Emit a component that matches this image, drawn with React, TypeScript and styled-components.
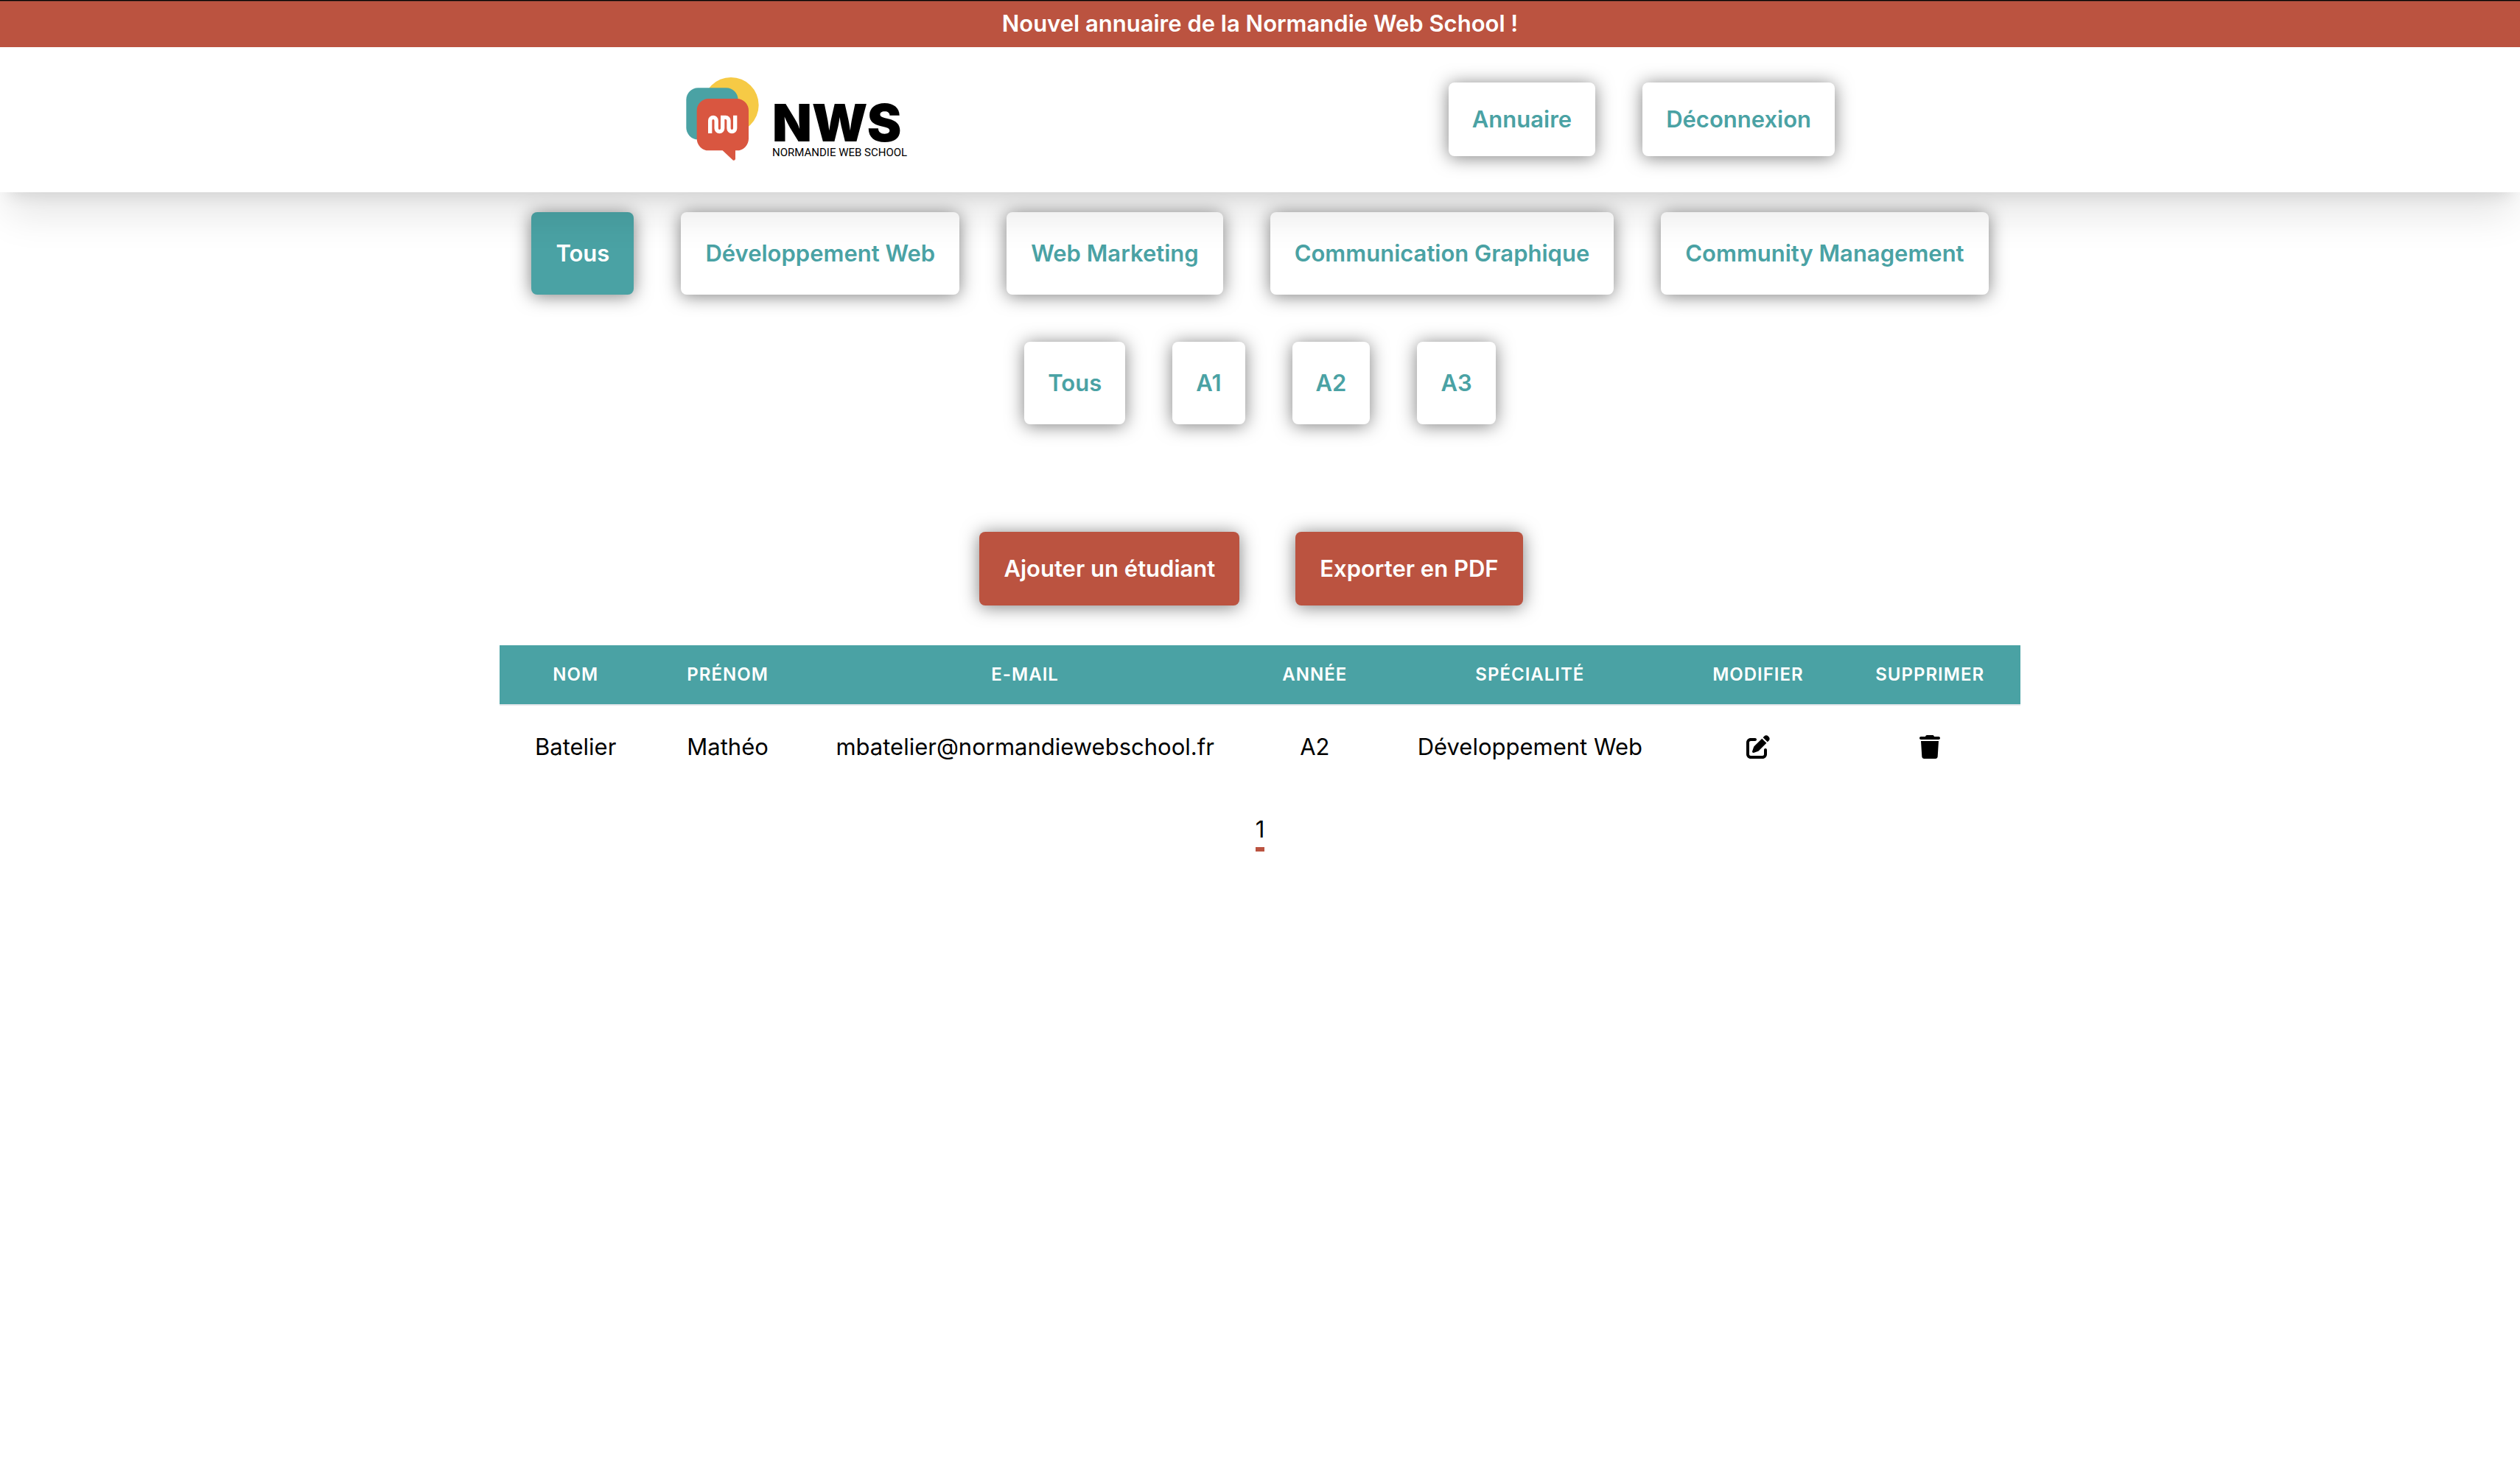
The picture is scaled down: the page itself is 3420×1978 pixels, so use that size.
import React, { useState } from 'react';
import styled, { createGlobalStyle, css } from 'styled-components';
import { FaPenToSquare, FaTrash } from 'react-icons/fa6';

const teal = '#4aa2a4';
const brick = '#bb5340';

const GlobalStyle = createGlobalStyle`
  *, *::before, *::after { box-sizing: border-box; }
  body {
    margin: 0;
    background: #fff;
    color: #000;
    font-family: Inter, 'Liberation Sans', sans-serif;
    font-size: 31px;
    line-height: 48px;
  }
  a { color: inherit; text-decoration: none; }
  button { font: inherit; color: inherit; cursor: pointer; }
`;

const Announcement = styled.p`
  margin: 0;
  padding: 7px 16px 8px;
  border-top: 1px solid #000;
  box-shadow: inset 0 1px 0 #6f3a30;
  background: ${brick};
  color: #fff;
  font-weight: 600;
  text-align: center;
`;

const Header = styled.header`
  position: relative;
  z-index: 1;
  padding: 40px 24px 41px;
  background: #fff;
  box-shadow: 0 40px 50px -10px rgba(0, 0, 0, 0.1), 0 16px 20px -12px rgba(0, 0, 0, 0.1);
`;

const HeaderInner = styled.div`
  display: flex;
  align-items: center;
  justify-content: space-between;
  max-width: 1560px;
  margin: 0 auto;
`;

const LogoLink = styled.a`
  display: flex;
  align-items: flex-end;
  gap: 18px;
`;

const LogoWords = styled.span`
  display: flex;
  flex-direction: column;
  gap: 4px;
  padding-bottom: 3px;
`;

const LogoName = styled.span`
  font-size: 70px;
  font-weight: 900;
  line-height: 52px;
`;

const LogoTagline = styled.span`
  font-family: Roboto, 'Liberation Sans', sans-serif;
  font-size: 15px;
  line-height: 20px;
`;

const Nav = styled.nav`
  display: flex;
  gap: 64px;
`;

const tile = css`
  padding: 32px;
  border: 0;
  border-radius: 8px;
  box-shadow: 0 2px 25px rgba(0, 0, 0, 0.5);
  font-weight: 600;
  white-space: nowrap;
`;

const NavLink = styled.a`
  ${tile}
  background: #fff;
  color: ${teal};
  line-height: 36px;
`;

const FilterButton = styled.button<{ $active?: boolean; $wide?: boolean }>`
  ${tile}
  padding: 32px ${({ $wide }) => ($wide ? 33 : 32)}px;
  background: ${({ $active }) => ($active ? teal : '#fff')};
  color: ${({ $active }) => ($active ? '#fff' : teal)};
`;

const ActionButton = styled.button`
  ${tile}
  padding: 32px 33px;
  background: ${brick};
  color: #fff;
  line-height: 36px;
`;

const Main = styled.main`
  padding: 27px 24px 0;
`;

const Filters = styled.section`
  display: grid;
  gap: 64px;
  margin-bottom: 146px;
`;

const FilterRow = styled.div`
  display: flex;
  flex-wrap: wrap;
  justify-content: center;
  gap: 64px;
`;

const Actions = styled.div`
  display: flex;
  justify-content: center;
  gap: 76px;
  margin-bottom: 54px;
  padding-right: 24px;
`;

const Table = styled.table`
  width: 100%;
  max-width: 2064px;
  margin: 0 auto;
  table-layout: fixed;
  border-collapse: collapse;
  text-align: center;
`;

const Col = styled.col<{ $share: number }>`
  width: ${({ $share }) => $share}%;
`;

const Head = styled.thead`
  background: ${teal};
  color: #fff;
`;

const HeadCell = styled.th`
  padding: 24px 16px;
  font-size: 24px;
  font-weight: 600;
  line-height: 32px;
  letter-spacing: 1px;
  text-transform: uppercase;
`;

const Body = styled.tbody`
  border-top: 2px solid #e5e7eb;
`;

const Cell = styled.td`
  padding: 32px 16px;
  white-space: nowrap;
`;

const IconButton = styled.button`
  display: block;
  margin: 0 auto;
  padding: 0;
  border: 0;
  background: none;
  font-size: 32px;

  svg { display: block; }
`;

const Pagination = styled.nav`
  display: flex;
  justify-content: center;
  margin-top: 32px;
`;

const PageLink = styled.a`
  border-bottom: 6px solid ${brick};
`;

function LogoMark() {
  return (
    <svg width="100" height="116" viewBox="93 72 300 348" aria-hidden="true">
      <circle cx="279" cy="188" r="113" fill="#f6ca45" />
      <rect x="97" y="118" width="211" height="210" rx="48" fill={teal} />
      <path
        d="M188 162H303A48 48 0 0 1 351 210V325A48 48 0 0 1 303 373H297V407Q296 415 288 413L245 373H188A48 48 0 0 1 140 325V210A48 48 0 0 1 188 162Z"
        fill="#d95640"
      />
      <path
        d="M194 303V251A12.7 12.7 0 0 1 219.5 251V283A12.7 12.7 0 0 0 245 283V238H257A12.7 12.7 0 0 1 270 251V283A12.7 12.7 0 0 0 296 283V230"
        fill="none"
        stroke="#fff"
        strokeWidth="16"
      />
    </svg>
  );
}

const specialities = [
  'Tous',
  'Développement Web',
  'Web Marketing',
  'Communication Graphique',
  'Community Management',
];
const years = ['Tous', 'A1', 'A2', 'A3'];

const columns = [
  { label: 'Nom', share: 10 },
  { label: 'Prénom', share: 10 },
  { label: 'E-mail', share: 29.1 },
  { label: 'Année', share: 9 },
  { label: 'Spécialité', share: 19.3 },
  { label: 'Modifier', share: 10.7 },
  { label: 'Supprimer', share: 11.9 },
];

const students = [
  {
    lastName: 'Batelier',
    firstName: 'Mathéo',
    email: 'mbatelier@normandiewebschool.fr',
    year: 'A2',
    speciality: 'Développement Web',
  },
];

export default function App() {
  const [speciality, setSpeciality] = useState('Tous');
  const [year, setYear] = useState('');

  return (
    <>
      <GlobalStyle />
      <Announcement>Nouvel annuaire de la Normandie Web School !</Announcement>
      <Header>
        <HeaderInner>
          <LogoLink href="#">
            <LogoMark />
            <LogoWords>
              <LogoName>NWS</LogoName>
              <LogoTagline>NORMANDIE WEB SCHOOL</LogoTagline>
            </LogoWords>
          </LogoLink>
          <Nav>
            <NavLink href="#annuaire">Annuaire</NavLink>
            <NavLink href="#deconnexion">Déconnexion</NavLink>
          </Nav>
        </HeaderInner>
      </Header>
      <Main>
        <Filters>
          <FilterRow>
            {specialities.map((name) => (
              <FilterButton
                key={name}
                type="button"
                $wide
                $active={name === speciality}
                onClick={() => setSpeciality(name)}
              >
                {name}
              </FilterButton>
            ))}
          </FilterRow>
          <FilterRow>
            {years.map((name) => (
              <FilterButton
                key={name}
                type="button"
                $active={name === year}
                onClick={() => setYear(name)}
              >
                {name}
              </FilterButton>
            ))}
          </FilterRow>
        </Filters>
        <Actions>
          <ActionButton type="button">Ajouter un étudiant</ActionButton>
          <ActionButton type="button">Exporter en PDF</ActionButton>
        </Actions>
        <Table>
          <colgroup>
            {columns.map(({ label, share }) => (
              <Col key={label} $share={share} />
            ))}
          </colgroup>
          <Head>
            <tr>
              {columns.map(({ label }) => (
                <HeadCell key={label} scope="col">{label}</HeadCell>
              ))}
            </tr>
          </Head>
          <Body>
            {students.map((student) => (
              <tr key={student.email}>
                <Cell>{student.lastName}</Cell>
                <Cell>{student.firstName}</Cell>
                <Cell>{student.email}</Cell>
                <Cell>{student.year}</Cell>
                <Cell>{student.speciality}</Cell>
                <Cell>
                  <IconButton type="button" aria-label="Modifier"><FaPenToSquare /></IconButton>
                </Cell>
                <Cell>
                  <IconButton type="button" aria-label="Supprimer"><FaTrash /></IconButton>
                </Cell>
              </tr>
            ))}
          </Body>
        </Table>
        <Pagination aria-label="Pagination">
          <PageLink href="#page-1" aria-current="page">1</PageLink>
        </Pagination>
      </Main>
    </>
  );
}
